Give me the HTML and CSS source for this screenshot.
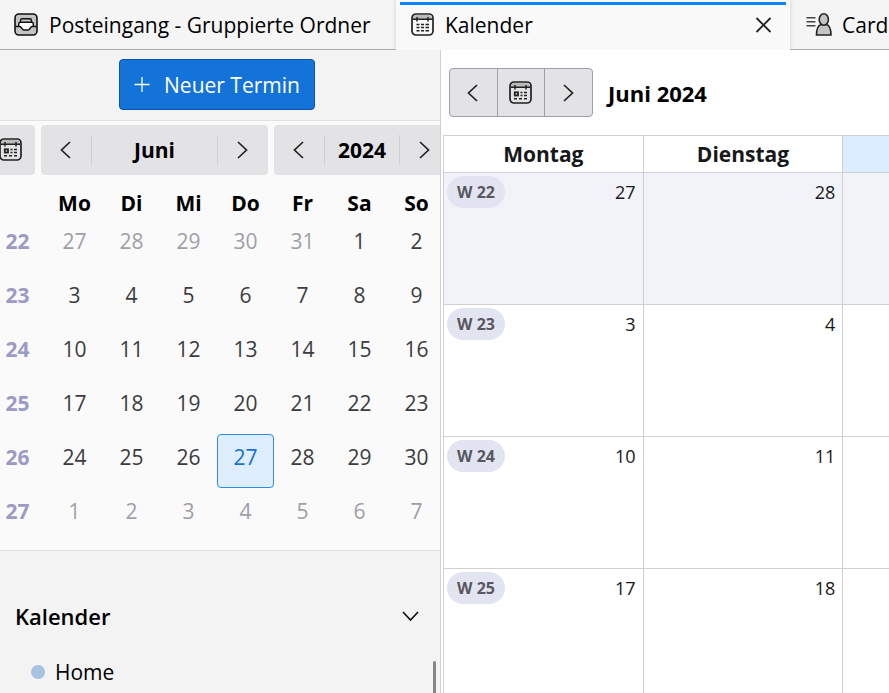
FILE: index.html
```html
<!DOCTYPE html>
<html lang="de">
<head>
    <meta charset="utf-8">
    <title>Kalender</title>
    <link rel="stylesheet" href="styles.css">
</head>
<body>
    <svg class="symbols" aria-hidden="true">
        <symbol id="icon-inbox" viewBox="0 0 24 24">
            <rect x="1" y="1" width="22" height="21" rx="4" fill="#c4c4c4" stroke="#111" stroke-width="1.6"/>
            <path d="M5 13.500V11c0-1 .5-1.500 1.500-1.500h11c1 0 1.500.5 1.500 1.500v2.500h-2c-1 1.500-1.500 3.500-3 3.500h-4c-1.500 0-2-2-3-3.500z" fill="#fff"/>
            <path d="M1.500 13.500H6c1.500 0 2 3.500 4 3.500h4c2 0 2.500-3.500 4-3.500h4.500" fill="none" stroke="#111" stroke-width="1.500"/>
            <path d="M4.700 13.500V11c0-1 .6-1.700 1.800-1.700h11c1.200 0 1.800.7 1.800 1.700v2.500M6.500 9V7.500c0-1.200.7-1.700 1.700-1.700h7.600c1 0 1.700.5 1.700 1.700V9" fill="none" stroke="#111" stroke-width="1.400"/>
        </symbol>
        <symbol id="icon-calendar" viewBox="0 0 24 24">
            <path d="M2 6V5a3.500 3.500 0 0 1 3-3h13a3.500 3.500 0 0 1 3 3v1z" fill="#bbb"/>
            <rect x="1" y="1" width="21" height="21" rx="4" fill="none" stroke="#222" stroke-width="1.700"/>
            <path d="M1.500 6.300h20M6 4v4.500M17 4v4.500" stroke="#222" stroke-width="1.500"/>
            <path d="M5.500 11.500h3M10 11.500h3M14.500 11.500h3.500M5.500 14.500h3M10 14.500h3M14.500 14.500h3.500M5.500 17.700h3M10 17.700h3M14.500 17.700h3.500" stroke="#222" stroke-width="1.600"/>
        </symbol>
        <symbol id="icon-today" viewBox="0 0 24 24">
            <path d="M2 6V5a3.500 3.500 0 0 1 3-3h13a3.500 3.500 0 0 1 3 3v1z" fill="#bbb"/>
            <rect x="1" y="1" width="21" height="21" rx="4" fill="none" stroke="#222" stroke-width="1.700"/>
            <path d="M1.500 6.300h20M6 4v4.500M17 4v4.500" stroke="#222" stroke-width="1.500"/>
            <rect x="5.800" y="11.300" width="3.200" height="3.200" fill="none" stroke="#222" stroke-width="1.800"/>
            <path d="M11.500 11.500h2M15 11.500h3M11.500 14.500h2M15 14.500h3M5 17.700h3M10 17.700h3M15 17.700h3" stroke="#222" stroke-width="1.500"/>
        </symbol>
        <symbol id="icon-contact" viewBox="0 0 26 24">
            <path d="M.5 4.700h9M.5 8.700h9M.5 12.700h9" stroke="#444" stroke-width="1.400"/>
            <path d="M15 11.500c-3 1-4.500 3.500-4.500 10.500h14.500c0-7-1.500-9.500-4.500-10.500z" fill="#c4c4c4" stroke="#222" stroke-width="1.600"/>
            <ellipse cx="17.800" cy="6.500" rx="4.600" ry="5.700" fill="#c4c4c4" stroke="#222" stroke-width="1.600"/>
        </symbol>
        <symbol id="icon-left" viewBox="0 0 20 20"><path d="M14 2L5.500 10l8.500 8" fill="none" stroke="#222" stroke-width="1.700"/></symbol>
        <symbol id="icon-right" viewBox="0 0 20 20"><path d="M5 2l8.500 8L5 18" fill="none" stroke="#222" stroke-width="1.700"/></symbol>
        <symbol id="icon-down" viewBox="0 0 20 20"><path d="M2 6l7.500 8L17 6" fill="none" stroke="#111" stroke-width="1.700"/></symbol>
        <symbol id="icon-close" viewBox="0 0 20 20"><path d="M3.500 3l14 14M17.500 3l-14 14" stroke="#222" stroke-width="1.800"/></symbol>
        <symbol id="icon-plus" viewBox="0 0 20 20"><path d="M8 2v15M.500 9.500h15" stroke="#fff" stroke-width="1.300"/></symbol>
    </svg>

    <nav class="tabs">
        <button class="tab tab-mail"><svg class="icon"><use href="#icon-inbox"/></svg>Posteingang - Gruppierte Ordner</button>
        <div class="tab-active">
            <button class="tab"><svg class="icon"><use href="#icon-calendar"/></svg>Kalender</button>
            <button class="close" aria-label="Tab schließen"><svg class="arrow"><use href="#icon-close"/></svg></button>
        </div>
        <button class="tab tab-card"><svg class="icon icon-wide"><use href="#icon-contact"/></svg>Card</button>
    </nav>

    <div class="main">
        <aside class="sidebar">
            <div class="new-event">
                <button class="primary"><svg class="arrow"><use href="#icon-plus"/></svg>Neuer Termin</button>
            </div>

            <section class="mini">
                <div class="mini-nav">
                    <button class="mini-today" aria-label="Heute"><svg class="icon"><use href="#icon-today"/></svg></button>
                    <div class="stepper stepper-month">
                        <button aria-label="Voriger Monat"><svg class="arrow"><use href="#icon-left"/></svg></button>
                        <span>Juni</span>
                        <button aria-label="Nächster Monat"><svg class="arrow"><use href="#icon-right"/></svg></button>
                    </div>
                    <div class="stepper stepper-year">
                        <button aria-label="Voriges Jahr"><svg class="arrow"><use href="#icon-left"/></svg></button>
                        <span>2024</span>
                        <button aria-label="Nächstes Jahr"><svg class="arrow"><use href="#icon-right"/></svg></button>
                    </div>
                </div>

                <table class="mini-month">
                    <thead>
                        <tr><td></td><th>Mo</th><th>Di</th><th>Mi</th><th>Do</th><th>Fr</th><th>Sa</th><th>So</th></tr>
                    </thead>
                    <tbody>
                        <tr><th>22</th><td class="other">27</td><td class="other">28</td><td class="other">29</td><td class="other">30</td><td class="other">31</td><td>1</td><td>2</td></tr>
                        <tr><th>23</th><td>3</td><td>4</td><td>5</td><td>6</td><td>7</td><td>8</td><td>9</td></tr>
                        <tr><th>24</th><td>10</td><td>11</td><td>12</td><td>13</td><td>14</td><td>15</td><td>16</td></tr>
                        <tr><th>25</th><td>17</td><td>18</td><td>19</td><td>20</td><td>21</td><td>22</td><td>23</td></tr>
                        <tr><th>26</th><td>24</td><td>25</td><td>26</td><td class="today">27</td><td>28</td><td>29</td><td>30</td></tr>
                        <tr><th>27</th><td class="other">1</td><td class="other">2</td><td class="other">3</td><td class="other">4</td><td class="other">5</td><td class="other">6</td><td class="other">7</td></tr>
                    </tbody>
                </table>
            </section>

            <section class="calendars">
                <div class="calendars-head">
                    <h2>Kalender</h2>
                    <button aria-label="Liste einklappen"><svg class="arrow"><use href="#icon-down"/></svg></button>
                </div>
                <div class="calendars-list">
                    <ul>
                        <li><span class="dot"></span>Home</li>
                    </ul>
                    <div class="scrollbar"></div>
                </div>
            </section>
        </aside>

        <main class="view">
            <header class="view-head">
                <div class="view-nav">
                    <button aria-label="Zurück"><svg class="arrow"><use href="#icon-left"/></svg></button>
                    <button aria-label="Heute"><svg class="icon"><use href="#icon-today"/></svg></button>
                    <button aria-label="Weiter"><svg class="arrow"><use href="#icon-right"/></svg></button>
                </div>
                <h1>Juni 2024</h1>
            </header>

            <table class="month">
                <thead>
                    <tr><th>Montag</th><th>Dienstag</th><th class="current"></th></tr>
                </thead>
                <tbody>
                    <tr class="off"><td><div class="day"><span class="week">W 22</span>27</div></td><td><div class="day">28</div></td><td></td></tr>
                    <tr><td><div class="day"><span class="week">W 23</span>3</div></td><td><div class="day">4</div></td><td></td></tr>
                    <tr><td><div class="day"><span class="week">W 24</span>10</div></td><td><div class="day">11</div></td><td></td></tr>
                    <tr><td><div class="day"><span class="week">W 25</span>17</div></td><td><div class="day">18</div></td><td></td></tr>
                </tbody>
            </table>
        </main>
    </div>
</body>
</html>
```
FILE: styles.css
```css
* {
    box-sizing: border-box;
}
body {
    display: flex;
    flex-direction: column;
    height: 100vh;
    margin: 0;
    overflow: hidden;
    font-family: "Open Sans", "Noto Sans", sans-serif;
    font-size: 21px;
    line-height: 30px;
    color: #000;
    background: #fff;
}
button {
    display: flex;
    align-items: center;
    justify-content: center;
    padding: 0;
    border: 0;
    background: none;
    font: inherit;
    color: inherit;
}
h1, h2 {
    margin: 0;
    font-size: 22px;
    line-height: 30px;
}
table {
    border-collapse: collapse;
    table-layout: fixed;
}
th, td {
    padding: 0;
}
.symbols {
    display: none;
}
.icon {
    flex: none;
    width: 24px;
    height: 24px;
}
.icon-wide {
    width: 26px;
}
.arrow {
    flex: none;
    width: 20px;
    height: 20px;
}

/* tabs */
.tabs {
    display: flex;
    flex: none;
    height: 50px;
    background: #f5f5f5;
}
.tab {
    gap: 11px;
    white-space: nowrap;
}
.tab-mail, .tab-card {
    flex: none;
    border-bottom: 1px solid #aaa;
}
.tab-mail {
    justify-content: flex-start;
    width: 396px;
    padding-left: 14px;
}
.tab-active {
    display: flex;
    flex: none;
    justify-content: space-between;
    width: 394px;
    padding: 0 12px 0 15px;
    background: linear-gradient(#0a84ff, #0a84ff) 4px 2px / 386px 3px no-repeat #f9f9fa;
    box-shadow: 0 0 4px #ccc;
}
.tab-active .tab {
    gap: 10px;
}
.tab-card {
    justify-content: flex-start;
    flex: 1;
    gap: 10px;
    padding-left: 16px;
}
.close {
    width: 30px;
}

.main {
    display: flex;
    flex: 1;
    min-height: 0;
    z-index: 1;
}

/* sidebar */
.sidebar {
    display: flex;
    flex-direction: column;
    flex: none;
    width: 441px;
    overflow: hidden;
    border-right: 1px solid #d0d0d3;
    background: #f3f3f3;
}
.new-event {
    display: flex;
    justify-content: center;
    padding: 9px 6px 10px 0;
    border-bottom: 1px solid #e1e1e3;
}
.primary {
    gap: 10px;
    width: 196px;
    height: 51px;
    border: 1px solid #0b55aa;
    border-radius: 4px;
    background: #1373d9;
    color: #fff;
}
.mini {
    flex: none;
    height: 430px;
    padding-top: 4px;
    border-bottom: 1px solid #e1e1e3;
    background: #fafafa;
}
.mini-nav {
    display: flex;
    gap: 6px;
    height: 50px;
}
.mini-today {
    flex: none;
    width: 35px;
    padding-right: 13px;
    border-radius: 0 4px 4px 0;
    background: #e3e3e5;
}
.stepper {
    display: flex;
    flex: none;
    align-items: center;
    border-radius: 4px;
    background: #e3e3e5;
    font-weight: bold;
}
.stepper span {
    flex: 1;
    border: solid #d0d0d3;
    border-width: 0 1px;
    text-align: center;
}
.stepper button {
    width: 50px;
    height: 50px;
}
.stepper-month {
    width: 227px;
}
.stepper-year {
    width: 176px;
}
.mini-month {
    width: 445px;
    margin-top: 12px;
    border-collapse: separate;
    border-spacing: 0;
    text-align: center;
    color: #3c3c40;
}
.mini-month tr > :first-child {
    width: 46px;
    padding-right: 11px;
    color: #9b9bc4;
}
.mini-month thead {
    color: #000;
}
.mini-month thead th {
    height: 31px;
}
.mini-month tbody td, .mini-month tbody th {
    height: 54px;
    padding-bottom: 8px;
}
.mini-month .other {
    color: #9f9fa6;
}
.mini-month .today {
    border: 1px solid #2a8ee6;
    border-radius: 4px;
    background: #deeeff;
    color: #1373d9;
}

.calendars {
    display: flex;
    flex: 1;
    flex-direction: column;
    padding: 50px 4px 0 15px;
}
.calendars-head {
    display: flex;
    align-items: center;
    justify-content: space-between;
    padding-right: 15px;
}
.calendars-head h2 {
    font-weight: 600;
}
.calendars-list {
    display: flex;
    flex: 1;
    justify-content: space-between;
    padding-top: 26px;
}
.calendars ul {
    margin: 0;
    padding: 0 0 0 16px;
    list-style: none;
}
.calendars li {
    display: flex;
    align-items: center;
    gap: 10px;
}
.dot {
    width: 14px;
    height: 14px;
    border-radius: 50%;
    background: #a8c2e1;
}
.scrollbar {
    width: 3px;
    margin-top: 4px;
    border-radius: 2px 2px 0 0;
    background: #858585;
}

/* month view */
.view {
    flex: 1;
    min-width: 0;
    padding-left: 2px;
    overflow: hidden;
    background: #fff;
}
.view-head {
    display: flex;
    align-items: center;
    gap: 15px;
    padding: 18px 6px;
}
.view-nav {
    display: flex;
    width: 144px;
    height: 49px;
    border: 1px solid #9f9fa8;
    border-radius: 4px;
    background: #e3e3e5;
}
.view-nav button {
    flex: 1;
}
.view-nav button + button {
    border-left: 1px solid #9f9fa8;
}
.month {
    width: 600px;
}
.month th, .month td {
    border: 1px solid #d0d0d3;
}
.month th {
    height: 37px;
    color: #18181b;
}
.month td {
    height: 132px;
    vertical-align: top;
}
.month .current {
    background: #dcedff;
}
.off {
    background: #f2f3f8;
}
.day {
    display: flex;
    align-items: center;
    justify-content: flex-end;
    padding: 3px 7px 0 3px;
    font-size: 18px;
    line-height: 32px;
    color: #18181b;
}
.week {
    margin-right: auto;
    padding: 0 10px;
    border-radius: 16px;
    background: #e2e4f2;
    color: #58585e;
    font-size: 16px;
    font-weight: bold;
}
```
